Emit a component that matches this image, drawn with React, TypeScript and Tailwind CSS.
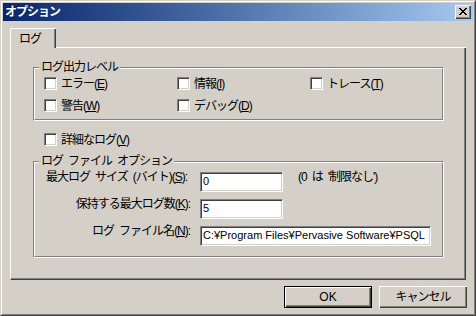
import React from "react";

const Mn: React.FC<{ children: React.ReactNode }> = ({ children }) => (
  <span className="underline underline-offset-[1px]">{children}</span>
);

const CheckBox: React.FC<{ label: string; mn: string }> = ({ label, mn }) => (
  <div className="flex items-center h-[13px]">
    <span className="shrink-0 w-[13px] h-[13px] bg-white border border-[#808080] border-r-white border-b-white shadow-[inset_1px_1px_0_#404040,inset_-1px_-1px_0_#d4d0c8]" />
    <span className="ml-[4px] leading-[14px] whitespace-nowrap">
      {label}(<Mn>{mn}</Mn>)
    </span>
  </div>
);

const GroupBox: React.FC<{ title: string; className?: string; children: React.ReactNode }> = ({
  title,
  className,
  children,
}) => (
  <div className={"w-[411px] border border-[#808080] border-r-white border-b-white " + (className ?? "")}>
    <div className="flex flex-col border border-white border-r-[#808080] border-b-[#808080]">
      <div className="-mt-[9px] ml-[4px] self-start px-[2px] bg-[#d4d0c8] leading-[14px] whitespace-pre">
        {title}
      </div>
      {children}
    </div>
  </div>
);

const Field: React.FC<{ w: string; children: React.ReactNode }> = ({ w, children }) => (
  <div
    className={
      w +
      " h-[20px] shrink-0 bg-white border border-[#808080] border-r-white border-b-white shadow-[inset_1px_1px_0_#404040,inset_-1px_-1px_0_#d4d0c8] pl-[2px] pt-[2px] text-[11px] leading-[13px] tracking-normal overflow-hidden whitespace-nowrap"
    }
  >
    {children}
  </div>
);

export default function App() {
  return (
    <div className="w-[476px] h-[316px] bg-[#d4d0c8] border border-[#d4d0c8] border-r-[#404040] border-b-[#404040] text-[12px] text-black font-['Liberation_Sans','Noto_Sans_CJK_JP',sans-serif] tracking-[-1px]">
      <div className="h-full flex flex-col border border-white border-r-[#808080] border-b-[#808080] p-[1px]">
        {/* title bar */}
        <div className="h-[18px] shrink-0 flex items-center justify-between bg-linear-to-r from-[#0a246a] to-[#a6caf0] pl-[2px] pr-[2px]">
          <span className="text-white font-bold leading-[14px]">オプション</span>
          <button className="w-[16px] h-[14px] flex items-center justify-center bg-[#d4d0c8] shadow-[inset_1px_1px_0_#fff,inset_-1px_-1px_0_#404040,inset_-2px_-2px_0_#808080]">
            <svg width="8" height="7" viewBox="0 0 8 7" shapeRendering="crispEdges" className="-mt-[1px]">
              <path
                fill="#000"
                d="M0 0h2v1h-2zM6 0h2v1h-2zM1 1h2v1h-2zM5 1h2v1h-2zM2 2h4v1h-4zM3 3h2v1h-2zM2 4h4v1h-4zM1 5h2v1h-2zM5 5h2v1h-2zM0 6h2v1h-2zM6 6h2v1h-2z"
              />
            </svg>
          </button>
        </div>

        {/* tab strip */}
        <div className="mt-[7px] ml-[7px] w-[456px] h-[20px] flex">
          <div className="w-[46px] h-[20px] border-l border-t border-white rounded-tl-[2px] shadow-[inset_-1px_0_0_#404040,inset_-2px_0_0_#808080] pl-[8px] pt-[3px] leading-[14px]">
            ログ
          </div>
          <div className="flex-1 border-b border-white" />
        </div>

        {/* tab page */}
        <div className="ml-[7px] w-[456px] h-[232px] flex flex-col border-l border-r border-b border-white border-r-[#404040] border-b-[#404040] shadow-[inset_-1px_-1px_0_#808080] pl-[22px] pt-[19px]">
          <GroupBox title="ログ出力レベル">
            <div className="mt-[3px] pl-[9px] pb-[7px] grid grid-cols-[133px_133px_auto] gap-y-[9px]">
              <CheckBox label="エラー" mn="E" />
              <CheckBox label="情報" mn="I" />
              <CheckBox label="トレース" mn="T" />
              <CheckBox label="警告" mn="W" />
              <CheckBox label="デバッグ" mn="D" />
            </div>
          </GroupBox>

          <div className="mt-[12px] ml-[11px]">
            <CheckBox label="詳細なログ" mn="V" />
          </div>

          <GroupBox title={"ログ\u2002ファイル\u2002オプション"} className="mt-[15px]">
            <div className="mt-[4px] pb-[10px] flex flex-col gap-[7px]">
              <div className="flex items-start">
                <div className="w-[165px] -mt-[2px] pl-[11px] leading-[14px] whitespace-pre">
                  {"最大ログ\u2002サイズ\u2002(バイト)("}
                  <Mn>S</Mn>):
                </div>
                <Field w="w-[83px]">0</Field>
                <div className="ml-[15px] -mt-[2px] leading-[14px] whitespace-pre">{"(0\u2002は\u2002'制限なし')"}</div>
              </div>
              <div className="flex items-start">
                <div className="w-[165px] -mt-[2px] pr-[10px] text-right leading-[14px] whitespace-nowrap">
                  保持する最大ログ数(<Mn>K</Mn>):
                </div>
                <Field w="w-[83px]">5</Field>
              </div>
              <div className="flex items-start">
                <div className="w-[165px] -mt-[2px] pr-[10px] text-right leading-[14px] whitespace-pre">
                  {"ログ\u2002ファイル名("}
                  <Mn>N</Mn>):
                </div>
                <Field w="w-[231px]">C:¥Program Files¥Pervasive Software¥PSQL</Field>
              </div>
            </div>
          </GroupBox>
        </div>

        {/* buttons */}
        <div className="mt-[6px] pr-[6px] flex justify-end gap-[7px]">
          <button className="w-[88px] h-[22px] border border-black shadow-[inset_1px_1px_0_#fff,inset_-1px_-1px_0_#404040,inset_-2px_-2px_0_#808080] tracking-normal leading-[14px]">
            OK
          </button>
          <button className="w-[88px] h-[22px] shadow-[inset_1px_1px_0_#fff,inset_-1px_-1px_0_#404040,inset_-2px_-2px_0_#808080] leading-[14px]">
            キャンセル
          </button>
        </div>
      </div>
    </div>
  );
}
